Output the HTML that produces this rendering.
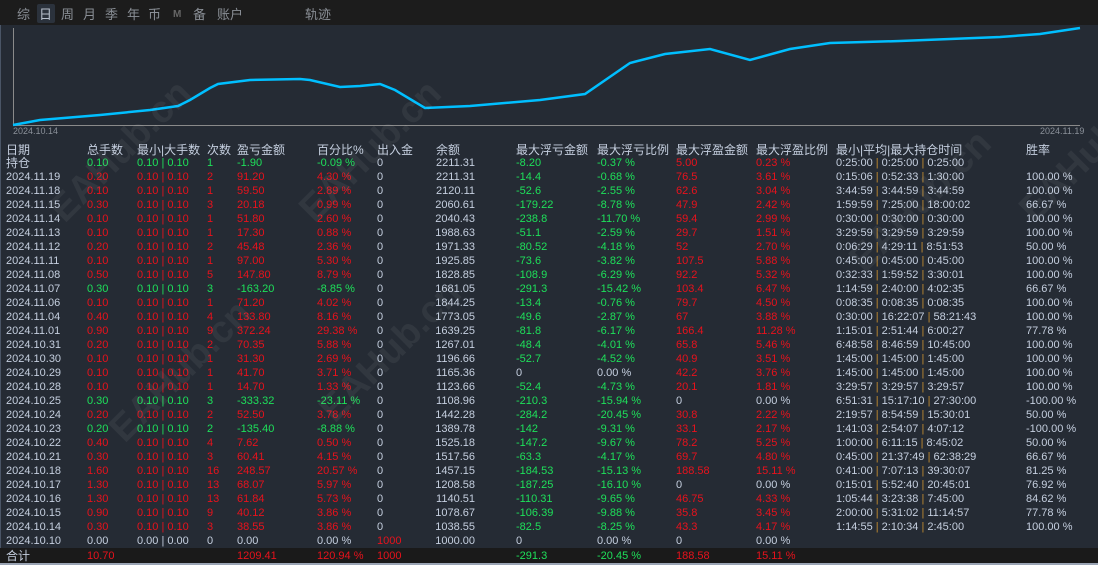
<!DOCTYPE html><html><head><meta charset="utf-8"><style>
*{margin:0;padding:0}
body{width:1098px;height:565px;background:#252b34;overflow:hidden;position:relative;font-family:"Liberation Sans","Noto Sans CJK SC",sans-serif;color:#c5cfdf}
#top{position:absolute;left:0;top:0;width:1098px;height:25px;background:#1c1c1c}
.t{position:absolute;top:7px;font-size:13px;color:#8a8f96;line-height:16px}
.r{position:absolute;left:0;width:1098px;height:14px;line-height:14px;font-size:11px}
.r i{font-style:normal;position:absolute;white-space:nowrap}
.a{left:6px}.b{left:87px}.c{left:137px}.d{left:207px}.e{left:237px}.f{left:317px}.g{left:377px}.h{left:420px;width:55px;text-align:right}
.i{left:516px}.j{left:597px}.k{left:676px}.l{left:756px}.m{left:836px}.n{left:1026px}
.p .b,.p .c,.p .d,.p .e,.p .f{color:#e8121c}
.l0 .b,.l0 .c,.l0 .d,.l0 .e,.l0 .f{color:#1ee05a}
.r .i,.r .j{color:#1ee05a}.r .k,.r .l{color:#e8121c}
.r i.w{color:#c5cfdf}
.m b{color:#c08a30;font-weight:normal}
.hd{font-size:12px}.hd i{color:#c5cfdf!important}
.wm{position:absolute;font-size:38px;font-weight:bold;color:rgba(255,255,255,0.06);transform:rotate(-45deg);white-space:nowrap}
</style></head><body>
<div id="top"></div>
<div class="t" style="left:17px">综</div>
<div style="position:absolute;left:37px;top:4px;width:18px;height:19px;background:#2b323c;border-radius:2px"></div>
<div class="t" style="left:39px;color:#b8c0cc">日</div>
<div class="t" style="left:61px">周</div><div class="t" style="left:83px">月</div><div class="t" style="left:105px">季</div><div class="t" style="left:127px">年</div><div class="t" style="left:148px">币</div>
<div class="t" style="left:173px;font-size:10px;font-weight:bold;color:#666">M</div>
<div class="t" style="left:193px">备</div><div class="t" style="left:217px">账户</div><div class="t" style="left:305px">轨迹</div>
<div style="position:absolute;left:0;top:25px;width:1px;height:540px;background:#4a5566"></div>
<svg style="position:absolute;left:0;top:0" width="1098" height="140">
<line x1="13.5" y1="28" x2="13.5" y2="125" stroke="#8a8a8a"/>
<line x1="13" y1="125.5" x2="1080" y2="125.5" stroke="#8a8a8a"/>
<polyline fill="none" stroke="#00bfff" stroke-width="2.5" points="13,125 40,120 100,115 150,110 178,106 190,100 210,88 218,84 250,80 300,79 310,80 340,87 360,86 380,84 395,90 425,108 470,106 540,100 585,94 630,63 665,54 710,49 750,60 790,49 830,43 900,41 1000,37 1040,34 1080,28"/>
<text x="13" y="134" font-size="9" fill="#8a9099" font-family="Liberation Sans">2024.10.14</text>
<text x="1040" y="134" font-size="9" fill="#8a9099" font-family="Liberation Sans">2024.11.19</text>
</svg>
<div style="position:absolute;left:0;top:548px;width:1098px;height:15px;background:#1a1a1a;border-bottom:2px solid #9aa4b4"></div>
<div class="r hd" style="top:143px"><i class="a">日期</i><i class="b">总手数</i><i class="c">最小|大手数</i><i class="d">次数</i><i class="e">盈亏金额</i><i class="f">百分比%</i><i class="g">出入金</i><i class="h" style="text-align:left;left:436px">余额</i><i class="i">最大浮亏金额</i><i class="j">最大浮亏比例</i><i class="k">最大浮盈金额</i><i class="l">最大浮盈比例</i><i class="m">最小|平均|最大持仓时间</i><i class="n">胜率</i></div>
<div class="r l0" style="top:156px"><i class="a" style="font-size:12px">持仓</i><i class="b">0.10</i><i class="c">0.10 | 0.10</i><i class="d">1</i><i class="e">-1.90</i><i class="f">-0.09 %</i><i class="g">0</i><i class="h">2211.31</i><i class="i">-8.20</i><i class="j">-0.37 %</i><i class="k">5.00</i><i class="l">0.23 %</i><i class="m">0:25:00 <b>|</b> 0:25:00 <b>|</b> 0:25:00</i></div>
<div class="r p" style="top:170px"><i class="a">2024.11.19</i><i class="b">0.20</i><i class="c">0.10 | 0.10</i><i class="d">2</i><i class="e">91.20</i><i class="f">4.30 %</i><i class="g">0</i><i class="h">2211.31</i><i class="i">-14.4</i><i class="j">-0.68 %</i><i class="k">76.5</i><i class="l">3.61 %</i><i class="m">0:15:06 <b>|</b> 0:52:33 <b>|</b> 1:30:00</i><i class="n">100.00 %</i></div>
<div class="r p" style="top:184px"><i class="a">2024.11.18</i><i class="b">0.10</i><i class="c">0.10 | 0.10</i><i class="d">1</i><i class="e">59.50</i><i class="f">2.89 %</i><i class="g">0</i><i class="h">2120.11</i><i class="i">-52.6</i><i class="j">-2.55 %</i><i class="k">62.6</i><i class="l">3.04 %</i><i class="m">3:44:59 <b>|</b> 3:44:59 <b>|</b> 3:44:59</i><i class="n">100.00 %</i></div>
<div class="r p" style="top:198px"><i class="a">2024.11.15</i><i class="b">0.30</i><i class="c">0.10 | 0.10</i><i class="d">3</i><i class="e">20.18</i><i class="f">0.99 %</i><i class="g">0</i><i class="h">2060.61</i><i class="i">-179.22</i><i class="j">-8.78 %</i><i class="k">47.9</i><i class="l">2.42 %</i><i class="m">1:59:59 <b>|</b> 7:25:00 <b>|</b> 18:00:02</i><i class="n">66.67 %</i></div>
<div class="r p" style="top:212px"><i class="a">2024.11.14</i><i class="b">0.10</i><i class="c">0.10 | 0.10</i><i class="d">1</i><i class="e">51.80</i><i class="f">2.60 %</i><i class="g">0</i><i class="h">2040.43</i><i class="i">-238.8</i><i class="j">-11.70 %</i><i class="k">59.4</i><i class="l">2.99 %</i><i class="m">0:30:00 <b>|</b> 0:30:00 <b>|</b> 0:30:00</i><i class="n">100.00 %</i></div>
<div class="r p" style="top:226px"><i class="a">2024.11.13</i><i class="b">0.10</i><i class="c">0.10 | 0.10</i><i class="d">1</i><i class="e">17.30</i><i class="f">0.88 %</i><i class="g">0</i><i class="h">1988.63</i><i class="i">-51.1</i><i class="j">-2.59 %</i><i class="k">29.7</i><i class="l">1.51 %</i><i class="m">3:29:59 <b>|</b> 3:29:59 <b>|</b> 3:29:59</i><i class="n">100.00 %</i></div>
<div class="r p" style="top:240px"><i class="a">2024.11.12</i><i class="b">0.20</i><i class="c">0.10 | 0.10</i><i class="d">2</i><i class="e">45.48</i><i class="f">2.36 %</i><i class="g">0</i><i class="h">1971.33</i><i class="i">-80.52</i><i class="j">-4.18 %</i><i class="k">52</i><i class="l">2.70 %</i><i class="m">0:06:29 <b>|</b> 4:29:11 <b>|</b> 8:51:53</i><i class="n">50.00 %</i></div>
<div class="r p" style="top:254px"><i class="a">2024.11.11</i><i class="b">0.10</i><i class="c">0.10 | 0.10</i><i class="d">1</i><i class="e">97.00</i><i class="f">5.30 %</i><i class="g">0</i><i class="h">1925.85</i><i class="i">-73.6</i><i class="j">-3.82 %</i><i class="k">107.5</i><i class="l">5.88 %</i><i class="m">0:45:00 <b>|</b> 0:45:00 <b>|</b> 0:45:00</i><i class="n">100.00 %</i></div>
<div class="r p" style="top:268px"><i class="a">2024.11.08</i><i class="b">0.50</i><i class="c">0.10 | 0.10</i><i class="d">5</i><i class="e">147.80</i><i class="f">8.79 %</i><i class="g">0</i><i class="h">1828.85</i><i class="i">-108.9</i><i class="j">-6.29 %</i><i class="k">92.2</i><i class="l">5.32 %</i><i class="m">0:32:33 <b>|</b> 1:59:52 <b>|</b> 3:30:01</i><i class="n">100.00 %</i></div>
<div class="r l0" style="top:282px"><i class="a">2024.11.07</i><i class="b">0.30</i><i class="c">0.10 | 0.10</i><i class="d">3</i><i class="e">-163.20</i><i class="f">-8.85 %</i><i class="g">0</i><i class="h">1681.05</i><i class="i">-291.3</i><i class="j">-15.42 %</i><i class="k">103.4</i><i class="l">6.47 %</i><i class="m">1:14:59 <b>|</b> 2:40:00 <b>|</b> 4:02:35</i><i class="n">66.67 %</i></div>
<div class="r p" style="top:296px"><i class="a">2024.11.06</i><i class="b">0.10</i><i class="c">0.10 | 0.10</i><i class="d">1</i><i class="e">71.20</i><i class="f">4.02 %</i><i class="g">0</i><i class="h">1844.25</i><i class="i">-13.4</i><i class="j">-0.76 %</i><i class="k">79.7</i><i class="l">4.50 %</i><i class="m">0:08:35 <b>|</b> 0:08:35 <b>|</b> 0:08:35</i><i class="n">100.00 %</i></div>
<div class="r p" style="top:310px"><i class="a">2024.11.04</i><i class="b">0.40</i><i class="c">0.10 | 0.10</i><i class="d">4</i><i class="e">133.80</i><i class="f">8.16 %</i><i class="g">0</i><i class="h">1773.05</i><i class="i">-49.6</i><i class="j">-2.87 %</i><i class="k">67</i><i class="l">3.88 %</i><i class="m">0:30:00 <b>|</b> 16:22:07 <b>|</b> 58:21:43</i><i class="n">100.00 %</i></div>
<div class="r p" style="top:324px"><i class="a">2024.11.01</i><i class="b">0.90</i><i class="c">0.10 | 0.10</i><i class="d">9</i><i class="e">372.24</i><i class="f">29.38 %</i><i class="g">0</i><i class="h">1639.25</i><i class="i">-81.8</i><i class="j">-6.17 %</i><i class="k">166.4</i><i class="l">11.28 %</i><i class="m">1:15:01 <b>|</b> 2:51:44 <b>|</b> 6:00:27</i><i class="n">77.78 %</i></div>
<div class="r p" style="top:338px"><i class="a">2024.10.31</i><i class="b">0.20</i><i class="c">0.10 | 0.10</i><i class="d">2</i><i class="e">70.35</i><i class="f">5.88 %</i><i class="g">0</i><i class="h">1267.01</i><i class="i">-48.4</i><i class="j">-4.01 %</i><i class="k">65.8</i><i class="l">5.46 %</i><i class="m">6:48:58 <b>|</b> 8:46:59 <b>|</b> 10:45:00</i><i class="n">100.00 %</i></div>
<div class="r p" style="top:352px"><i class="a">2024.10.30</i><i class="b">0.10</i><i class="c">0.10 | 0.10</i><i class="d">1</i><i class="e">31.30</i><i class="f">2.69 %</i><i class="g">0</i><i class="h">1196.66</i><i class="i">-52.7</i><i class="j">-4.52 %</i><i class="k">40.9</i><i class="l">3.51 %</i><i class="m">1:45:00 <b>|</b> 1:45:00 <b>|</b> 1:45:00</i><i class="n">100.00 %</i></div>
<div class="r p" style="top:366px"><i class="a">2024.10.29</i><i class="b">0.10</i><i class="c">0.10 | 0.10</i><i class="d">1</i><i class="e">41.70</i><i class="f">3.71 %</i><i class="g">0</i><i class="h">1165.36</i><i class="i w">0</i><i class="j w">0.00 %</i><i class="k">42.2</i><i class="l">3.76 %</i><i class="m">1:45:00 <b>|</b> 1:45:00 <b>|</b> 1:45:00</i><i class="n">100.00 %</i></div>
<div class="r p" style="top:380px"><i class="a">2024.10.28</i><i class="b">0.10</i><i class="c">0.10 | 0.10</i><i class="d">1</i><i class="e">14.70</i><i class="f">1.33 %</i><i class="g">0</i><i class="h">1123.66</i><i class="i">-52.4</i><i class="j">-4.73 %</i><i class="k">20.1</i><i class="l">1.81 %</i><i class="m">3:29:57 <b>|</b> 3:29:57 <b>|</b> 3:29:57</i><i class="n">100.00 %</i></div>
<div class="r l0" style="top:394px"><i class="a">2024.10.25</i><i class="b">0.30</i><i class="c">0.10 | 0.10</i><i class="d">3</i><i class="e">-333.32</i><i class="f">-23.11 %</i><i class="g">0</i><i class="h">1108.96</i><i class="i">-210.3</i><i class="j">-15.94 %</i><i class="k w">0</i><i class="l w">0.00 %</i><i class="m">6:51:31 <b>|</b> 15:17:10 <b>|</b> 27:30:00</i><i class="n">-100.00 %</i></div>
<div class="r p" style="top:408px"><i class="a">2024.10.24</i><i class="b">0.20</i><i class="c">0.10 | 0.10</i><i class="d">2</i><i class="e">52.50</i><i class="f">3.78 %</i><i class="g">0</i><i class="h">1442.28</i><i class="i">-284.2</i><i class="j">-20.45 %</i><i class="k">30.8</i><i class="l">2.22 %</i><i class="m">2:19:57 <b>|</b> 8:54:59 <b>|</b> 15:30:01</i><i class="n">50.00 %</i></div>
<div class="r l0" style="top:422px"><i class="a">2024.10.23</i><i class="b">0.20</i><i class="c">0.10 | 0.10</i><i class="d">2</i><i class="e">-135.40</i><i class="f">-8.88 %</i><i class="g">0</i><i class="h">1389.78</i><i class="i">-142</i><i class="j">-9.31 %</i><i class="k">33.1</i><i class="l">2.17 %</i><i class="m">1:41:03 <b>|</b> 2:54:07 <b>|</b> 4:07:12</i><i class="n">-100.00 %</i></div>
<div class="r p" style="top:436px"><i class="a">2024.10.22</i><i class="b">0.40</i><i class="c">0.10 | 0.10</i><i class="d">4</i><i class="e">7.62</i><i class="f">0.50 %</i><i class="g">0</i><i class="h">1525.18</i><i class="i">-147.2</i><i class="j">-9.67 %</i><i class="k">78.2</i><i class="l">5.25 %</i><i class="m">1:00:00 <b>|</b> 6:11:15 <b>|</b> 8:45:02</i><i class="n">50.00 %</i></div>
<div class="r p" style="top:450px"><i class="a">2024.10.21</i><i class="b">0.30</i><i class="c">0.10 | 0.10</i><i class="d">3</i><i class="e">60.41</i><i class="f">4.15 %</i><i class="g">0</i><i class="h">1517.56</i><i class="i">-63.3</i><i class="j">-4.17 %</i><i class="k">69.7</i><i class="l">4.80 %</i><i class="m">0:45:00 <b>|</b> 21:37:49 <b>|</b> 62:38:29</i><i class="n">66.67 %</i></div>
<div class="r p" style="top:464px"><i class="a">2024.10.18</i><i class="b">1.60</i><i class="c">0.10 | 0.10</i><i class="d">16</i><i class="e">248.57</i><i class="f">20.57 %</i><i class="g">0</i><i class="h">1457.15</i><i class="i">-184.53</i><i class="j">-15.13 %</i><i class="k">188.58</i><i class="l">15.11 %</i><i class="m">0:41:00 <b>|</b> 7:07:13 <b>|</b> 39:30:07</i><i class="n">81.25 %</i></div>
<div class="r p" style="top:478px"><i class="a">2024.10.17</i><i class="b">1.30</i><i class="c">0.10 | 0.10</i><i class="d">13</i><i class="e">68.07</i><i class="f">5.97 %</i><i class="g">0</i><i class="h">1208.58</i><i class="i">-187.25</i><i class="j">-16.10 %</i><i class="k w">0</i><i class="l w">0.00 %</i><i class="m">0:15:01 <b>|</b> 5:52:40 <b>|</b> 20:45:01</i><i class="n">76.92 %</i></div>
<div class="r p" style="top:492px"><i class="a">2024.10.16</i><i class="b">1.30</i><i class="c">0.10 | 0.10</i><i class="d">13</i><i class="e">61.84</i><i class="f">5.73 %</i><i class="g">0</i><i class="h">1140.51</i><i class="i">-110.31</i><i class="j">-9.65 %</i><i class="k">46.75</i><i class="l">4.33 %</i><i class="m">1:05:44 <b>|</b> 3:23:38 <b>|</b> 7:45:00</i><i class="n">84.62 %</i></div>
<div class="r p" style="top:506px"><i class="a">2024.10.15</i><i class="b">0.90</i><i class="c">0.10 | 0.10</i><i class="d">9</i><i class="e">40.12</i><i class="f">3.86 %</i><i class="g">0</i><i class="h">1078.67</i><i class="i">-106.39</i><i class="j">-9.88 %</i><i class="k">35.8</i><i class="l">3.45 %</i><i class="m">2:00:00 <b>|</b> 5:31:02 <b>|</b> 11:14:57</i><i class="n">77.78 %</i></div>
<div class="r p" style="top:520px"><i class="a">2024.10.14</i><i class="b">0.30</i><i class="c">0.10 | 0.10</i><i class="d">3</i><i class="e">38.55</i><i class="f">3.86 %</i><i class="g">0</i><i class="h">1038.55</i><i class="i">-82.5</i><i class="j">-8.25 %</i><i class="k">43.3</i><i class="l">4.17 %</i><i class="m">1:14:55 <b>|</b> 2:10:34 <b>|</b> 2:45:00</i><i class="n">100.00 %</i></div>
<div class="r" style="top:534px"><i class="a">2024.10.10</i><i class="b">0.00</i><i class="c">0.00 | 0.00</i><i class="d">0</i><i class="e">0.00</i><i class="f">0.00 %</i><i class="g" style="color:#e8121c">1000</i><i class="h">1000.00</i><i class="i w">0</i><i class="j w">0.00 %</i><i class="k w">0</i><i class="l w">0.00 %</i></div>
<div class="r p" style="top:549px"><i class="a" style="font-size:12px">合计</i><i class="b">10.70</i><i class="e">1209.41</i><i class="f">120.94 %</i><i class="g" style="color:#e8121c">1000</i><i class="i">-291.3</i><i class="j">-20.45 %</i><i class="k">188.58</i><i class="l">15.11 %</i></div>
<div class="wm" style="left:30px;top:130px">EAHub.cn</div>
<div class="wm" style="left:280px;top:130px">EAHub.cn</div>
<div class="wm" style="left:1000px;top:130px">EAHub.cn</div>
<div class="wm" style="left:90px;top:350px">EAHub.cn</div>
<div class="wm" style="left:300px;top:330px">EAHub.cn</div>
<div class="wm" style="left:830px;top:180px">EAHub.cn</div>
</body></html>
